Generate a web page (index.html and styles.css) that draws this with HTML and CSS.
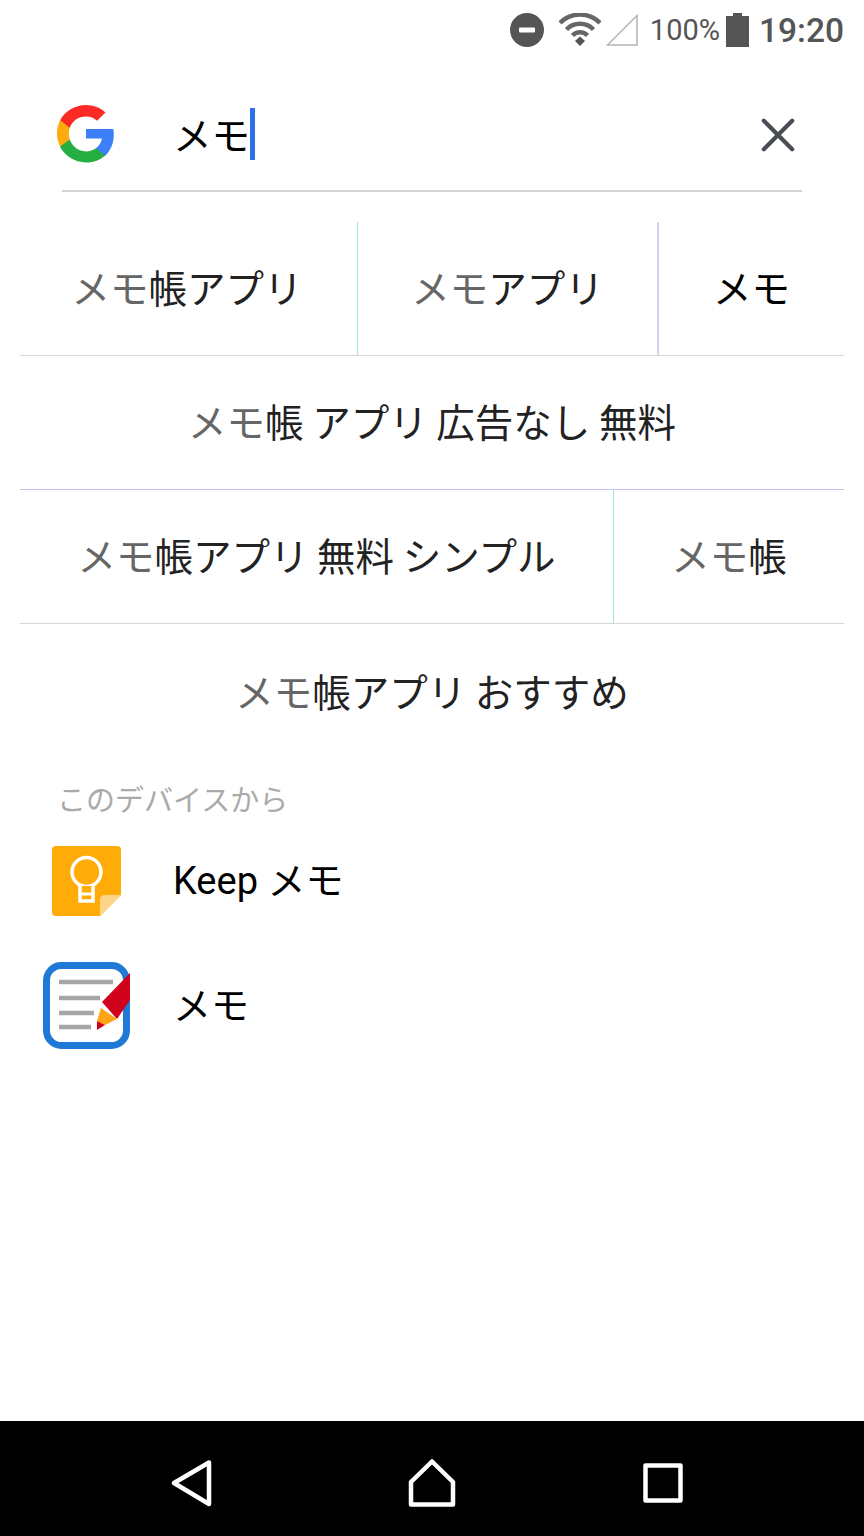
FILE: index.html

```html
<!DOCTYPE html>
<html lang="ja">
<head>
  <meta charset="utf-8">
  <title>メモ</title>
  <link rel="stylesheet" href="styles.css">
</head>
<body>
  <div class="phone">
    <div class="status-bar">
      <svg class="ic-dnd" width="34" height="34" viewBox="0 0 34 34"><circle cx="17" cy="17" r="17" fill="#555"/><rect x="9" y="14.5" width="16" height="5" rx="1" fill="#fff"/></svg>
      <svg class="ic-wifi" width="42" height="34" viewBox="0 0 42 34"><path d="M1 10 A28 28 0 0 1 41 10" fill="none" stroke="#666" stroke-width="4.5"/><path d="M7.5 16.5 A19 19 0 0 1 34.5 16.5" fill="none" stroke="#666" stroke-width="4.5"/><path d="M13.5 22.5 A10.5 10.5 0 0 1 28.500 22.500" fill="none" stroke="#666" stroke-width="4.5"/><path d="M16 28 L21 23.500 L26 28 L21 33 Z" fill="#555"/></svg>
      <svg class="ic-signal" width="32" height="32" viewBox="0 0 32 32"><path d="M31 1.500 V31 H1.500 Z" fill="none" stroke="#b5b5b5" stroke-width="1.500"/></svg>
      <span class="pct">100%</span>
      <svg class="ic-batt" width="23" height="34" viewBox="0 0 23 34"><path d="M7 0 H16 V3 H23 V34 H0 V3 H7 Z" fill="#555"/></svg>
      <span class="clock">19:20</span>
    </div>

    <div class="search">
      <svg class="g-logo" width="58" height="58" viewBox="0 0 48 48">
        <path fill="#3c7ff8" d="M47 24.500c0-1.600-.1-3.200-.4-4.700H24v8h13.200c-.6 3.400-2.400 6-5 7.900v6.300h7.700c4.500-4.100 7.100-10.300 7.100-17.500z"/>
        <path fill="#27ae43" d="M24 47.500c6.400 0 11.800-2.100 15.900-5.800l-7.700-6c-2.200 1.500-5 2.700-8.200 2.700-6.200 0-11.500-4.200-13.400-9.800H2.600v6.200C6.500 42.100 14.600 47.500 24 47.500z"/>
        <path fill="#fdab0d" d="M10.600 28.600c-.5-1.500-.8-3.100-.8-5.100s.3-3.200.8-4.700v-6.200H2.600C1 15.800 0 19.500 0 23.500s1 7.700 2.600 10.900l8-5.800z"/>
        <path fill="#fb2a25" d="M24 9.500c3.500 0 6.700 1.200 9.200 3.600l6.900-6.900C35.800 2.300 30.400 0 24 0 14.600 0 6.500 5.300 2.600 12.600l8 6.200C12.500 13.200 17.800 9.500 24 9.500z"/>
      </svg>
      <div class="query"><span class="query-text">メモ</span><span class="caret"></span></div>
      <svg class="clear" width="36" height="36" viewBox="0 0 36 36"><path d="M3 3 L33 33 M33 3 L3 33" stroke="#4a4d55" stroke-width="4.500" stroke-linecap="round"/></svg>
    </div>

    <div class="chips">
      <div class="chip-row">
        <div class="chip w-337 line-teal nudge"><span class="hit">メモ</span>帳アプリ</div>
        <div class="chip w-301 line-violet"><span class="hit">メモ</span>アプリ</div>
        <div class="chip grow strong">メモ</div>
      </div>
      <div class="chip-row">
        <div class="chip grow"><span class="hit">メモ</span>帳 アプリ 広告なし 無料</div>
      </div>
      <div class="chip-row">
        <div class="chip w-593 line-teal"><span class="hit">メモ</span>帳アプリ 無料 シンプル</div>
        <div class="chip grow"><span class="hit">メモ</span>帳</div>
      </div>
      <div class="chip-row last">
        <div class="chip grow"><span class="hit">メモ</span>帳アプリ おすすめ</div>
      </div>
    </div>

    <div class="section-label">このデバイスから</div>

    <div class="app-row keep">
      <div class="app-icon">
        <svg width="72" height="72" viewBox="0 0 72 72">
          <path d="M5 1 H66 Q70 1 70 5 V50 L49 71 H5 Q1 71 1 67 V5 Q1 1 5 1 Z" fill="#ffab08"/>
          <path d="M70 50 H54 Q49 50 49 55 V71 Z" fill="#fdd588"/>
          <circle cx="35.500" cy="27" r="14.500" fill="none" stroke="#fff" stroke-width="3.500"/>
          <path d="M29 41 V56 H42 V41" fill="#ffab08" stroke="#fff" stroke-width="3.500"/>
          <path d="M28 49 H43" stroke="#fff" stroke-width="3"/>
        </svg>
      </div>
      <div class="app-name">Keep メモ</div>
    </div>

    <div class="app-row memo">
      <div class="app-icon">
        <svg width="88" height="88" viewBox="0 0 88 88">
          <rect x="3.500" y="3.500" width="80" height="80" rx="15" fill="#fff" stroke="#2079d6" stroke-width="7"/>
          <path d="M16 20 H70 M16 36 H57 M16 51 H51 M16 65 H48" stroke="#a6a6a6" stroke-width="4.500"/>
          <path d="M87 11 V38 L74 57 L59 40 Z" fill="#d0021b"/>
          <path d="M58 46 L74 57 L62 63 L54 59 Z" fill="#ffa415"/>
          <path d="M54 59 L62 63 L54 68 Z" fill="#d0021b"/>
        </svg>
      </div>
      <div class="app-name">メモ</div>
    </div>

    <div class="nav-bar">
      <svg width="44" height="48" viewBox="0 0 44 48"><path d="M3 24 L38 3.500 V45 Z" fill="none" stroke="#fff" stroke-width="4.500" stroke-linejoin="round"/></svg>
      <svg class="nav-home" width="48" height="48" viewBox="0 0 48 48"><path d="M24 2.500 L45 23 V45.500 H3 V23 Z" fill="none" stroke="#fff" stroke-width="4.500" stroke-linejoin="round"/></svg>
      <svg width="40" height="40" viewBox="0 0 40 40"><rect x="2.500" y="2.500" width="35" height="35" fill="none" stroke="#fff" stroke-width="4.500" stroke-linejoin="round"/></svg>
    </div>
  </div>
</body>
</html>
```

FILE: styles.css

```css
html, body {
  margin: 0;
  padding: 0;
}
body {
  background: #fff;
  font-family: "Noto Sans CJK JP", "Noto Sans", sans-serif;
  color: #000;
}
.phone {
  width: 864px;
  height: 1536px;
  display: flex;
  flex-direction: column;
  overflow: hidden;
}

/* ステータスバー */
.status-bar {
  height: 60px;
  display: flex;
  align-items: center;
  justify-content: flex-end;
  padding-right: 20px;
}
.ic-dnd { margin-right: 15px; }
.ic-wifi { margin-right: 5px; }
.ic-signal { margin-right: 12px; }
.pct {
  font-family: Roboto, sans-serif;
  font-size: 29px;
  color: #555;
  margin-right: 6px;
}
.ic-batt { margin-right: 10px; }
.clock {
  font-family: Roboto, sans-serif;
  font-size: 33.5px;
  font-weight: 500;
  color: #555;
}

/* 検索欄 */
.search {
  height: 111px;
  padding-top: 19px;
  margin: 0 62px;
  border-bottom: 2px solid #d2d2d2;
  display: flex;
  align-items: center;
}
.g-logo {
  margin-left: -5px;
  margin-top: -2px;
}
.query {
  margin-left: 58px;
  margin-top: -2px;
  font-size: 38.5px;
  line-height: 52px;
  display: flex;
  align-items: center;
  flex: 1;
}
.query-text { padding-bottom: 2px; }
.caret {
  width: 5px;
  height: 52px;
  background: #2f6fe8;
}
.clear {
  margin-right: 7px;
  width: 34px;
  height: 34px;
}

/* 候補 */
.chips {
  margin: 30px 20px 0;
}
.chip-row {
  display: flex;
  height: 133px;
  border-bottom: 1px solid #d6d6d6;
}
.chip-row.last {
  border-bottom: 0;
}
.chip {
  display: flex;
  align-items: center;
  justify-content: center;
  font-size: 38.5px;
  color: #222;
  white-space: pre;
  box-sizing: border-box;
  padding-bottom: 5px;
}
.chip-row.last .chip { padding-bottom: 1px; }
.hit { color: #666; }
.strong { color: #000; }
.grow { flex: 1; }
.w-337 { width: 338px; }
.w-301 { width: 301px; }
.w-593 { width: 594px; }
.nudge { padding-right: 3px; }
.line-teal { border-right: 1px solid #9fe3e3; }
.line-violet { border-right: 2px solid #d3d0f2; }
.chip-row:nth-child(2) { border-bottom-color: #c9c0fa; }

.section-label {
  margin: 21px 0 0 57px;
  font-size: 29px;
  line-height: 40px;
  color: #aaa;
}

/* アプリ */
.app-row {
  display: flex;
  align-items: center;
}
.app-icon {
  width: 173px;
  display: flex;
  box-sizing: border-box;
}
.keep {
  margin-top: 27px;
  height: 72px;
}
.keep .app-icon { padding-left: 51px; }
.memo {
  margin-top: 45px;
  height: 88px;
}
.memo .app-icon { padding-left: 43px; }
.app-name {
  font-family: Roboto, "Noto Sans CJK JP", sans-serif;
  font-size: 38px;
  line-height: 52px;
  padding-bottom: 1px;
}

/* ナビゲーションバー */
.nav-bar {
  margin-top: auto;
  height: 107px;
  padding: 8px 181px 0 171px;
  background: #000;
  display: flex;
  align-items: center;
  justify-content: space-between;
}
.nav-home { margin-left: 6px; }
```
